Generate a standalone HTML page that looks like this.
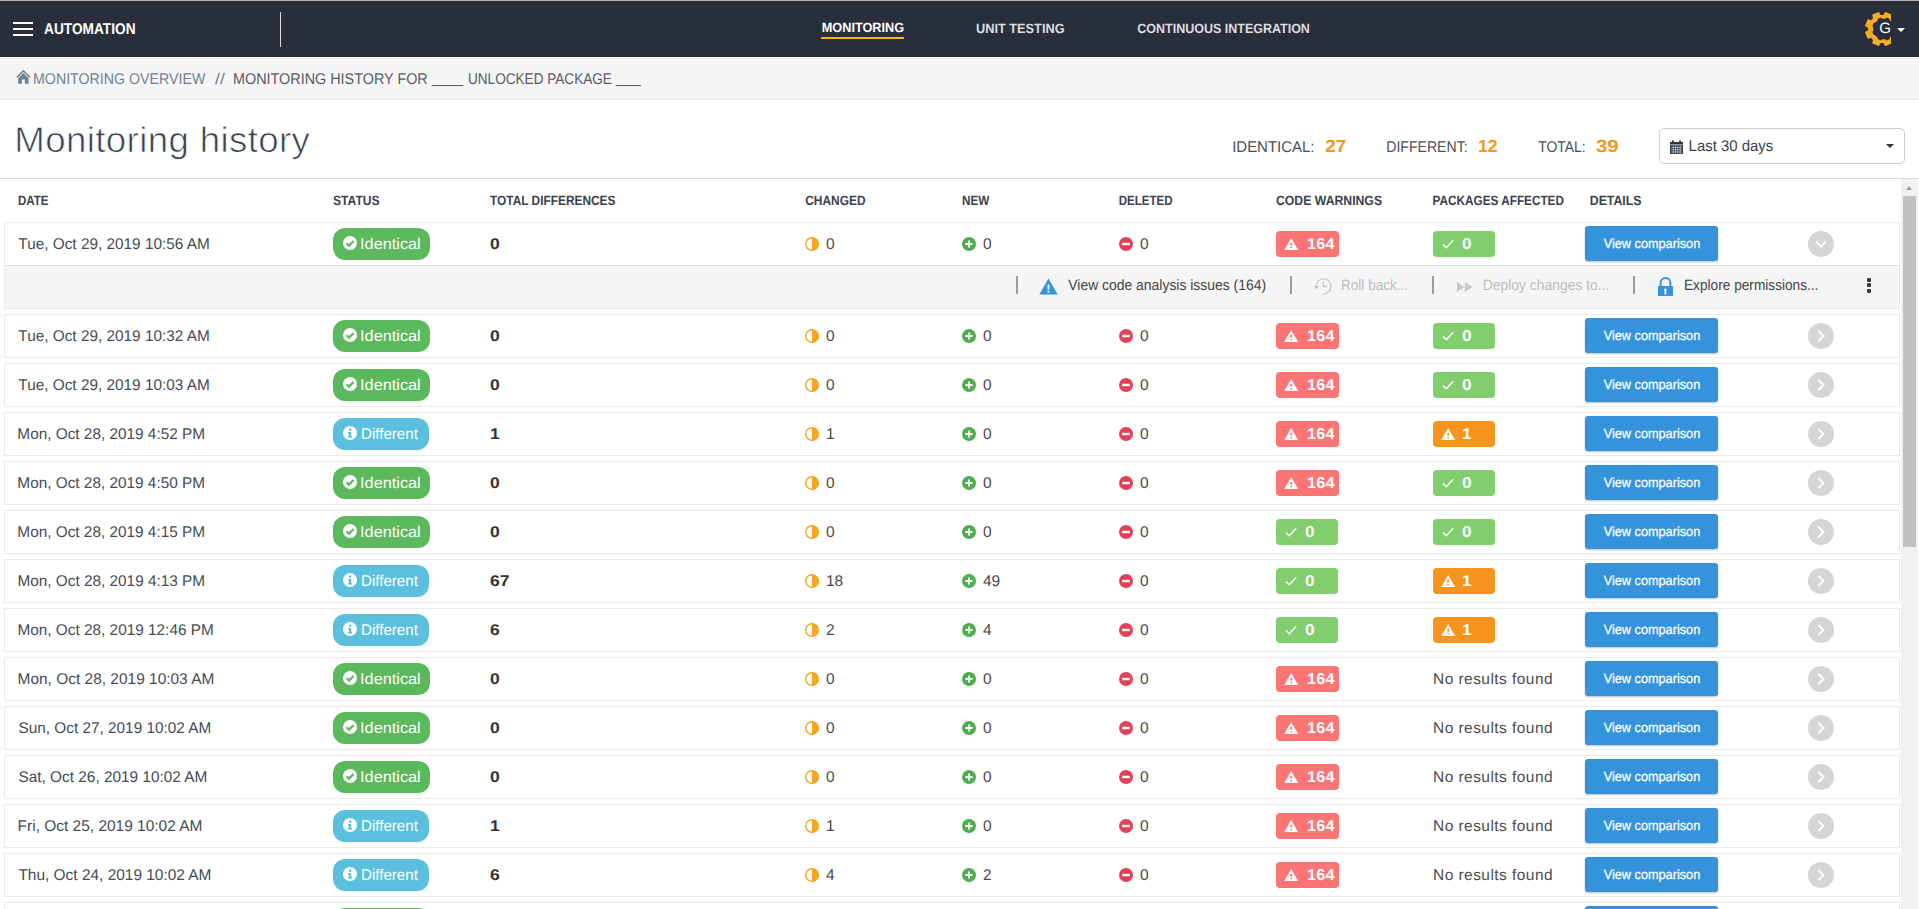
<!DOCTYPE html>
<html lang="en">
<head>
<meta charset="utf-8">
<title>Monitoring history</title>
<style>
*{box-sizing:border-box;margin:0;padding:0;transform-origin:0 0}
html,body{width:1919px;height:909px;overflow:hidden;background:#fff}
body{text-rendering:geometricPrecision;font-family:"Liberation Sans",sans-serif;font-size:15px;color:#3a3f4a;position:relative}
svg{display:block}
.abs{position:absolute}
#topline{position:absolute;left:0;top:0;width:1919px;height:1px;background:#b6b3b4}
#nav{position:absolute;left:0;top:1px;width:1919px;height:56px;background:#292e3b}
#burger{position:absolute;left:13px;top:21px;width:20px;height:14px}
#burger i{position:absolute;left:0;width:20px;height:2px;background:#fff}
#brand{position:absolute;left:44px;top:19px;font-weight:bold;font-size:15.5px;line-height:20px;color:#fff;white-space:nowrap}
#navsep{position:absolute;left:280px;top:11px;width:1px;height:35px;background:#dcdcdc}
.nv{position:absolute;top:19px;font-weight:bold;font-size:13.4px;line-height:18px;color:#dcdde0;white-space:nowrap}
.nv.act{color:#fff;top:18px}
#navul{position:absolute;left:821px;top:36px;width:83px;height:2px;background:#f9b328}
#gear{position:absolute;left:1864px;top:10px;width:27.2px;height:36px;overflow:hidden}
#gearG{transform:translateY(.4px);position:absolute;left:1879.3px;top:18px;font-size:15px;line-height:20px;color:#fff}
#navcar{position:absolute;left:1897px;top:27px;width:0;height:0;border-left:4px solid transparent;border-right:4px solid transparent;border-top:4px solid #fff}
#crumbs{position:absolute;left:0;top:57px;width:1919px;height:43px;background:#f5f5f5;border-bottom:1px solid #ececec}
#crumbs span{position:absolute;top:13px;font-size:15.5px;line-height:20px;white-space:nowrap}
#home{position:absolute;left:15.6px;top:12.3px;width:14.8px;height:15.7px}
#title{position:absolute;left:14.3px;top:117.7px;letter-spacing:.35px;font-size:35.6px;line-height:44px;color:#37424f;white-space:nowrap;-webkit-text-stroke:0.7px #fff}
.stl{position:absolute;top:138px;font-size:15.5px;line-height:20px;color:#4a4f5a;white-space:nowrap}
.stn{position:absolute;top:134px;font-size:17.6px;line-height:24px;font-weight:bold;color:#f7941d;white-space:nowrap}
#sel{position:absolute;left:1659px;top:128px;width:246px;height:36px;border:1px solid #ccc;border-radius:5px;background:#fff}
#sel span{position:absolute;left:29px;top:8px;font-size:15.5px;line-height:20px;color:#3a3f4a;white-space:nowrap}
#cal{position:absolute;left:10px;top:11px;width:13px;height:14px}
#selcar{position:absolute;left:226px;top:15px;width:0;height:0;border-left:4px solid transparent;border-right:4px solid transparent;border-top:4px solid #333}
#hline{position:absolute;left:0;top:178px;width:1919px;height:1px;background:#d9d9d9}
.th{position:absolute;top:192px;font-size:13.4px;line-height:18px;font-weight:bold;color:#3a424d;white-space:nowrap}
.row{position:absolute;left:4px;width:1896px;height:44px;border:1px solid #ebebeb;background:#fff}
.row.first{border-bottom-color:#dcdcdc}
.c{position:absolute;top:0;height:42px;line-height:44px;white-space:nowrap}
.date{left:13px;font-size:15.5px;color:#474c54}
.stc{left:328px}
.tot{left:485px;font-weight:bold;font-size:15.5px;color:#333;transform:scaleX(1.13)}
.chg{left:800px}.new{left:957px}.del{left:1114px}
.cic{position:absolute;left:0;top:14px;width:14px;height:14px}
.chg span,.new span,.del span{position:absolute;left:21px;top:0;color:#4a4a4a;font-size:15.5px}
.cw{left:1271px}.pk{left:1428px}.det{left:1580px}
.st{position:absolute;left:0;top:5px;height:32px;border-radius:12px;color:#fff;font-size:15px;line-height:34px;width:97px}
.st.ident{background:#5cb85c}
.st.diff{background:#5bc0de;width:96px}
.st span{position:absolute;left:28px;top:0;font-size:15.5px}
.sic{position:absolute;left:10px;top:8px;width:14px;height:14px}
.bdg{position:absolute;left:0;top:8px;height:26px;border-radius:4px;color:#fff;line-height:26px}
.bdg.red{background:#fc7474;width:63px;color:#fc7474}
.bdg.org{background:#f7941d;width:62px;color:#f7941d}
.bdg.grn{background:#82cd6e;width:62px;color:#82cd6e}
.bdg b{position:absolute;left:30.5px;top:1px;color:#fff;font-size:15.7px;letter-spacing:.2px;transform:scaleX(1.03);transform-origin:0 0}
.bdg.grn b,.bdg.org b{left:28.6px;transform:scaleX(1.1)}
.wic{position:absolute;left:8px;top:6.7px;width:14.4px;height:12.4px}
.kic{position:absolute;left:9px;top:8px;width:12px;height:10px}
.nores{position:absolute;left:0;top:0;color:#4c4c4c;font-size:15.5px;letter-spacing:.45px}
.btn i{position:absolute;left:17px;top:0;font-style:normal;white-space:nowrap;-webkit-text-stroke:.25px #fff}
.btn{position:absolute;left:0;top:3px;width:133px;height:35px;border-radius:3px;background:#3593dc;color:#fff;font-size:13.4px;line-height:35px;box-shadow:0 1px 2px rgba(0,0,0,.25)}
.arr{position:absolute;left:1803px;top:8px;width:26px;height:26px}
#panel{position:absolute;left:4px;top:266px;width:1896px;height:43px;background:#f5f5f5;border:1px solid #ebebeb;border-top:none}
.psep{position:absolute;top:10px;width:2px;height:18px;background:#9b9b9b}
.pt{position:absolute;top:10px;font-size:15px;line-height:20px;color:#444;white-space:nowrap}
.pt.dis{color:#bdbdbd}
.pi{position:absolute}
#dots{position:absolute;left:1862px;top:12.2px;width:4px;height:15px}
#dots i{position:absolute;left:0;width:4px;height:3.8px;background:#3a3a3a;border-radius:1px}
#sbar{position:absolute;left:1901px;top:179px;width:17px;height:730px;background:#f1f1f1}
#sthumb{position:absolute;left:2px;top:17px;width:13px;height:351px;background:#c1c1c1}
#sup{position:absolute;left:5px;top:7px;width:0;height:0;border-left:3.5px solid transparent;border-right:3.5px solid transparent;border-bottom:4px solid #a3a3a3}
</style>
</head>
<body>
<div id="topline"></div>
<div id="nav">
  <div id="burger"><i style="top:0"></i><i style="top:6px"></i><i style="top:12px"></i></div>
  <div id="brand" style="transform:translateX(0.0px) scaleX(0.8835)">AUTOMATION</div>
  <div id="navsep"></div>
  <div class="nv act" style="transform:translateX(0.75px) scaleX(0.9483);left:821px">MONITORING</div>
  <div id="navul"></div>
  <div class="nv" style="transform:translateX(0.0px) scaleX(0.9527);left:976px">UNIT TESTING</div>
  <div class="nv" style="transform:translateX(0.3px) scaleX(0.933);left:1137px">CONTINUOUS INTEGRATION</div>
  <div id="gear"><svg width="36" height="36" viewBox="-18 -18 36 36" style="margin-left:0;margin-top:0"><path d="M14.02 1.47 L16.49 2.61 L16.95 3.45 L14.43 9.55 L13.51 9.82 L10.96 8.87 L8.87 10.96 L9.82 13.51 L9.55 14.43 L3.45 16.95 L2.61 16.49 L1.47 14.02 L-1.47 14.02 L-2.61 16.49 L-3.45 16.95 L-9.55 14.43 L-9.82 13.51 L-8.87 10.96 L-10.96 8.87 L-13.51 9.82 L-14.43 9.55 L-16.95 3.45 L-16.49 2.61 L-14.02 1.47 L-14.02 -1.47 L-16.49 -2.61 L-16.95 -3.45 L-14.43 -9.55 L-13.51 -9.82 L-10.96 -8.87 L-8.87 -10.96 L-9.82 -13.51 L-9.55 -14.43 L-3.45 -16.95 L-2.61 -16.49 L-1.47 -14.02 L1.47 -14.02 L2.61 -16.49 L3.45 -16.95 L9.55 -14.43 L9.82 -13.51 L8.87 -10.96 L10.96 -8.87 L13.51 -9.82 L14.43 -9.55 L16.95 -3.45 L16.49 -2.61 L14.02 -1.47 Z M13.15 -2.85 L12.07 -1.64 L12.07 1.64 L13.15 2.85 L11.81 6.08 L10.19 6.17 L7.87 8.49 L7.78 10.11 L4.55 11.45 L3.34 10.37 L0.06 10.37 L-1.15 11.45 L-4.38 10.11 L-4.47 8.49 L-6.79 6.17 L-8.41 6.08 L-9.75 2.85 L-8.67 1.64 L-8.67 -1.64 L-9.75 -2.85 L-8.41 -6.08 L-6.79 -6.17 L-4.47 -8.49 L-4.38 -10.11 L-1.15 -11.45 L0.06 -10.37 L3.34 -10.37 L4.55 -11.45 L7.78 -10.11 L7.87 -8.49 L10.19 -6.17 L11.81 -6.08 Z" fill="#f6ab27" fill-rule="evenodd"/></svg></div>
  <div id="gearG">G</div>
  <div id="navcar"></div>
</div>
<div id="crumbs">
  <svg id="home" viewBox="0 0 16 15" preserveAspectRatio="none"><path d="M8 0.6 L15.6 7.4 L14.6 8.5 L8 2.7 L1.4 8.5 L0.4 7.4 Z" fill="#728091"/><path d="M8 3.9 L13.6 8.8 V14 H9.6 V10 H6.4 V14 H2.4 V8.8 Z" fill="#728091"/></svg>
  <span style="transform:translateX(0px) scaleX(0.9165);left:33px;color:#728091">MONITORING OVERVIEW</span>
  <span style="transform:translateX(0px) scaleX(1.15);left:215px;color:#728091">//</span>
  <span style="transform:translateX(0px) scaleX(0.9281);left:233px;color:#555b63">MONITORING HISTORY FOR</span> <span style="transform:translateX(0px) scaleX(0.72);left:432px;top:11.5px;color:#555b63">_____</span> <span style="transform:translateX(0px) scaleX(0.8763);left:467.5px;color:#555b63">UNLOCKED PACKAGE</span> <span style="transform:translateX(0px) scaleX(0.72);left:616.4px;top:11.5px;color:#555b63">____</span>
</div>
<div id="title" style="transform:translateX(0.35px) scaleX(1.0306)">Monitoring history</div>
<div class="stl" style="transform:translateX(0.2px) scaleX(0.9643);left:1232px">IDENTICAL:</div><div class="stn" style="transform:translateX(0.2px) scaleX(1.0737);left:1325px">27</div>
<div class="stl" style="transform:translateX(0.3px) scaleX(0.9076);left:1386px">DIFFERENT:</div><div class="stn" style="transform:translateX(0px) scaleX(1.0);left:1478px">12</div>
<div class="stl" style="transform:translateX(0.25px) scaleX(0.8942);left:1538px">TOTAL:</div><div class="stn" style="transform:translateX(0.0px) scaleX(1.1579);left:1596px">39</div>
<div id="sel">
  <svg id="cal" viewBox="0 0 14 14" preserveAspectRatio="none"><path d="M0 2h14v2.6H0z M2.2 0.4h2v2.4h-2z M9.8 0.4h2v2.4h-2z" fill="#2f3640"/><path d="M0 5.2h14V14H0z" fill="#2f3640"/><path d="M1 7.6h12M1 9.8h12M1 12h12" stroke="#cfd3d8" stroke-width=".7"/><path d="M3.5 5.6v8M6 5.6v8M8.5 5.6v8M11 5.6v8" stroke="#cfd3d8" stroke-width=".7"/></svg>
  <span style="transform:translateX(-0.4px) scaleX(0.9632)">Last 30 days</span>
  <div id="selcar"></div>
</div>
<div id="hline"></div>
<div class="th" style="transform:translateX(0.0px) scaleX(0.8611);left:18px">DATE</div>
<div class="th" style="transform:translateX(0.0px) scaleX(0.9038);left:333px">STATUS</div>
<div class="th" style="transform:translateX(0.0px) scaleX(0.8873);left:490px">TOTAL DIFFERENCES</div>
<div class="th" style="transform:translateX(0.25px) scaleX(0.8897);left:805px">CHANGED</div>
<div class="th" style="transform:translateX(0.0px) scaleX(0.875);left:962px">NEW</div>
<div class="th" style="transform:translateX(-0.25px) scaleX(0.8629);left:1119px">DELETED</div>
<div class="th" style="transform:translateX(0.0px) scaleX(0.9138);left:1276px">CODE WARNINGS</div>
<div class="th" style="transform:translateX(-0.5px) scaleX(0.8792);left:1433px">PACKAGES AFFECTED</div>
<div class="th" style="transform:translateX(-0.25px) scaleX(0.9196);left:1590px">DETAILS</div>
<div class="row first" style="top:222px"><div class="c date" style="transform:translateX(0.35px) scaleX(0.9902)">Tue, Oct 29, 2019 10:56 AM</div><div class="c stc"><span class="st ident"><svg class="sic" viewBox="0 0 14 14"><circle cx="7" cy="7" r="7" fill="#fff"/><path d="M3.6 7.2 L6 9.6 L10.6 4.9" fill="none" stroke="#5cb85c" stroke-width="2.2"/></svg><span style="transform:translateX(-0.9px) scaleX(1.05)">Identical</span></span></div><div class="c tot">0</div><div class="c chg"><svg class="cic" viewBox="0 0 14 14"><circle cx="7" cy="7" r="6.3" fill="#fff" stroke="#f5a623" stroke-width="1.4"/><path d="M7 0.2 A6.8 6.8 0 0 1 7 13.8 Z" fill="#f5a623"/></svg><span>0</span></div><div class="c new"><svg class="cic" viewBox="0 0 14 14"><circle cx="7" cy="7" r="7" fill="#4cae4c"/><path d="M7 3.4v7.2M3.4 7h7.2" stroke="#fff" stroke-width="2"/></svg><span>0</span></div><div class="c del"><svg class="cic" viewBox="0 0 14 14"><circle cx="7" cy="7" r="7" fill="#e4405a"/><path d="M3.2 7h7.6" stroke="#fff" stroke-width="2.4"/></svg><span>0</span></div><div class="c cw"><span class="bdg red"><svg class="wic" viewBox="0 0 14 12"><path d="M7 0 L14 12 L0 12 Z" fill="#fff"/><rect x="6.1" y="4.7" width="1.8" height="2.6" fill="currentColor"/><rect x="6.1" y="8.6" width="1.8" height="1.3" fill="currentColor"/></svg><b>164</b></span></div><div class="c pk"><span class="bdg grn"><svg class="kic" viewBox="0 0 12 10"><path d="M1 5.6 L4.3 8.8 L11.2 1.2" fill="none" stroke="#fff" stroke-width="1.4"/></svg><b>0</b></span></div><div class="c det"><span class="btn"><i style="transform:translateX(1.7px) scaleX(0.949)">View comparison</i></span></div><div class="arr"><svg viewBox="0 0 26 26"><circle cx="13" cy="13" r="13" fill="#d5d5d5"/><path d="M8.2 10.6 L13 15.4 L17.8 10.6" fill="none" stroke="#fff" stroke-width="2"/></svg></div></div>
<div class="row" style="top:314px"><div class="c date" style="transform:translateX(0.35px) scaleX(0.9902)">Tue, Oct 29, 2019 10:32 AM</div><div class="c stc"><span class="st ident"><svg class="sic" viewBox="0 0 14 14"><circle cx="7" cy="7" r="7" fill="#fff"/><path d="M3.6 7.2 L6 9.6 L10.6 4.9" fill="none" stroke="#5cb85c" stroke-width="2.2"/></svg><span style="transform:translateX(-0.9px) scaleX(1.05)">Identical</span></span></div><div class="c tot">0</div><div class="c chg"><svg class="cic" viewBox="0 0 14 14"><circle cx="7" cy="7" r="6.3" fill="#fff" stroke="#f5a623" stroke-width="1.4"/><path d="M7 0.2 A6.8 6.8 0 0 1 7 13.8 Z" fill="#f5a623"/></svg><span>0</span></div><div class="c new"><svg class="cic" viewBox="0 0 14 14"><circle cx="7" cy="7" r="7" fill="#4cae4c"/><path d="M7 3.4v7.2M3.4 7h7.2" stroke="#fff" stroke-width="2"/></svg><span>0</span></div><div class="c del"><svg class="cic" viewBox="0 0 14 14"><circle cx="7" cy="7" r="7" fill="#e4405a"/><path d="M3.2 7h7.6" stroke="#fff" stroke-width="2.4"/></svg><span>0</span></div><div class="c cw"><span class="bdg red"><svg class="wic" viewBox="0 0 14 12"><path d="M7 0 L14 12 L0 12 Z" fill="#fff"/><rect x="6.1" y="4.7" width="1.8" height="2.6" fill="currentColor"/><rect x="6.1" y="8.6" width="1.8" height="1.3" fill="currentColor"/></svg><b>164</b></span></div><div class="c pk"><span class="bdg grn"><svg class="kic" viewBox="0 0 12 10"><path d="M1 5.6 L4.3 8.8 L11.2 1.2" fill="none" stroke="#fff" stroke-width="1.4"/></svg><b>0</b></span></div><div class="c det"><span class="btn"><i style="transform:translateX(1.7px) scaleX(0.949)">View comparison</i></span></div><div class="arr"><svg viewBox="0 0 26 26"><circle cx="13" cy="13" r="13" fill="#d5d5d5"/><path d="M10.4 7.9 L15.5 13 L10.4 18.1" fill="none" stroke="#fff" stroke-width="2"/></svg></div></div>
<div class="row" style="top:363px"><div class="c date" style="transform:translateX(0.35px) scaleX(0.9902)">Tue, Oct 29, 2019 10:03 AM</div><div class="c stc"><span class="st ident"><svg class="sic" viewBox="0 0 14 14"><circle cx="7" cy="7" r="7" fill="#fff"/><path d="M3.6 7.2 L6 9.6 L10.6 4.9" fill="none" stroke="#5cb85c" stroke-width="2.2"/></svg><span style="transform:translateX(-0.9px) scaleX(1.05)">Identical</span></span></div><div class="c tot">0</div><div class="c chg"><svg class="cic" viewBox="0 0 14 14"><circle cx="7" cy="7" r="6.3" fill="#fff" stroke="#f5a623" stroke-width="1.4"/><path d="M7 0.2 A6.8 6.8 0 0 1 7 13.8 Z" fill="#f5a623"/></svg><span>0</span></div><div class="c new"><svg class="cic" viewBox="0 0 14 14"><circle cx="7" cy="7" r="7" fill="#4cae4c"/><path d="M7 3.4v7.2M3.4 7h7.2" stroke="#fff" stroke-width="2"/></svg><span>0</span></div><div class="c del"><svg class="cic" viewBox="0 0 14 14"><circle cx="7" cy="7" r="7" fill="#e4405a"/><path d="M3.2 7h7.6" stroke="#fff" stroke-width="2.4"/></svg><span>0</span></div><div class="c cw"><span class="bdg red"><svg class="wic" viewBox="0 0 14 12"><path d="M7 0 L14 12 L0 12 Z" fill="#fff"/><rect x="6.1" y="4.7" width="1.8" height="2.6" fill="currentColor"/><rect x="6.1" y="8.6" width="1.8" height="1.3" fill="currentColor"/></svg><b>164</b></span></div><div class="c pk"><span class="bdg grn"><svg class="kic" viewBox="0 0 12 10"><path d="M1 5.6 L4.3 8.8 L11.2 1.2" fill="none" stroke="#fff" stroke-width="1.4"/></svg><b>0</b></span></div><div class="c det"><span class="btn"><i style="transform:translateX(1.7px) scaleX(0.949)">View comparison</i></span></div><div class="arr"><svg viewBox="0 0 26 26"><circle cx="13" cy="13" r="13" fill="#d5d5d5"/><path d="M10.4 7.9 L15.5 13 L10.4 18.1" fill="none" stroke="#fff" stroke-width="2"/></svg></div></div>
<div class="row" style="top:412px"><div class="c date" style="transform:translateX(-0.65px) scaleX(0.9899)">Mon, Oct 28, 2019 4:52 PM</div><div class="c stc"><span class="st diff"><svg class="sic" viewBox="0 0 14 14"><circle cx="7" cy="7" r="7" fill="#fff"/><rect x="6" y="2.6" width="2.2" height="2.2" fill="#5bc0de"/><path d="M5 6h3.2v4h1v1.4H5V10h1V7.4H5z" fill="#5bc0de"/></svg><span style="transform:translateX(0.0px) scaleX(0.9759)">Different</span></span></div><div class="c tot">1</div><div class="c chg"><svg class="cic" viewBox="0 0 14 14"><circle cx="7" cy="7" r="6.3" fill="#fff" stroke="#f5a623" stroke-width="1.4"/><path d="M7 0.2 A6.8 6.8 0 0 1 7 13.8 Z" fill="#f5a623"/></svg><span>1</span></div><div class="c new"><svg class="cic" viewBox="0 0 14 14"><circle cx="7" cy="7" r="7" fill="#4cae4c"/><path d="M7 3.4v7.2M3.4 7h7.2" stroke="#fff" stroke-width="2"/></svg><span>0</span></div><div class="c del"><svg class="cic" viewBox="0 0 14 14"><circle cx="7" cy="7" r="7" fill="#e4405a"/><path d="M3.2 7h7.6" stroke="#fff" stroke-width="2.4"/></svg><span>0</span></div><div class="c cw"><span class="bdg red"><svg class="wic" viewBox="0 0 14 12"><path d="M7 0 L14 12 L0 12 Z" fill="#fff"/><rect x="6.1" y="4.7" width="1.8" height="2.6" fill="currentColor"/><rect x="6.1" y="8.6" width="1.8" height="1.3" fill="currentColor"/></svg><b>164</b></span></div><div class="c pk"><span class="bdg org"><svg class="wic" viewBox="0 0 14 12"><path d="M7 0 L14 12 L0 12 Z" fill="#fff"/><rect x="6.1" y="4.7" width="1.8" height="2.6" fill="currentColor"/><rect x="6.1" y="8.6" width="1.8" height="1.3" fill="currentColor"/></svg><b>1</b></span></div><div class="c det"><span class="btn"><i style="transform:translateX(1.7px) scaleX(0.949)">View comparison</i></span></div><div class="arr"><svg viewBox="0 0 26 26"><circle cx="13" cy="13" r="13" fill="#d5d5d5"/><path d="M10.4 7.9 L15.5 13 L10.4 18.1" fill="none" stroke="#fff" stroke-width="2"/></svg></div></div>
<div class="row" style="top:461px"><div class="c date" style="transform:translateX(-0.65px) scaleX(0.9899)">Mon, Oct 28, 2019 4:50 PM</div><div class="c stc"><span class="st ident"><svg class="sic" viewBox="0 0 14 14"><circle cx="7" cy="7" r="7" fill="#fff"/><path d="M3.6 7.2 L6 9.6 L10.6 4.9" fill="none" stroke="#5cb85c" stroke-width="2.2"/></svg><span style="transform:translateX(-0.9px) scaleX(1.05)">Identical</span></span></div><div class="c tot">0</div><div class="c chg"><svg class="cic" viewBox="0 0 14 14"><circle cx="7" cy="7" r="6.3" fill="#fff" stroke="#f5a623" stroke-width="1.4"/><path d="M7 0.2 A6.8 6.8 0 0 1 7 13.8 Z" fill="#f5a623"/></svg><span>0</span></div><div class="c new"><svg class="cic" viewBox="0 0 14 14"><circle cx="7" cy="7" r="7" fill="#4cae4c"/><path d="M7 3.4v7.2M3.4 7h7.2" stroke="#fff" stroke-width="2"/></svg><span>0</span></div><div class="c del"><svg class="cic" viewBox="0 0 14 14"><circle cx="7" cy="7" r="7" fill="#e4405a"/><path d="M3.2 7h7.6" stroke="#fff" stroke-width="2.4"/></svg><span>0</span></div><div class="c cw"><span class="bdg red"><svg class="wic" viewBox="0 0 14 12"><path d="M7 0 L14 12 L0 12 Z" fill="#fff"/><rect x="6.1" y="4.7" width="1.8" height="2.6" fill="currentColor"/><rect x="6.1" y="8.6" width="1.8" height="1.3" fill="currentColor"/></svg><b>164</b></span></div><div class="c pk"><span class="bdg grn"><svg class="kic" viewBox="0 0 12 10"><path d="M1 5.6 L4.3 8.8 L11.2 1.2" fill="none" stroke="#fff" stroke-width="1.4"/></svg><b>0</b></span></div><div class="c det"><span class="btn"><i style="transform:translateX(1.7px) scaleX(0.949)">View comparison</i></span></div><div class="arr"><svg viewBox="0 0 26 26"><circle cx="13" cy="13" r="13" fill="#d5d5d5"/><path d="M10.4 7.9 L15.5 13 L10.4 18.1" fill="none" stroke="#fff" stroke-width="2"/></svg></div></div>
<div class="row" style="top:510px"><div class="c date" style="transform:translateX(-0.65px) scaleX(0.9899)">Mon, Oct 28, 2019 4:15 PM</div><div class="c stc"><span class="st ident"><svg class="sic" viewBox="0 0 14 14"><circle cx="7" cy="7" r="7" fill="#fff"/><path d="M3.6 7.2 L6 9.6 L10.6 4.9" fill="none" stroke="#5cb85c" stroke-width="2.2"/></svg><span style="transform:translateX(-0.9px) scaleX(1.05)">Identical</span></span></div><div class="c tot">0</div><div class="c chg"><svg class="cic" viewBox="0 0 14 14"><circle cx="7" cy="7" r="6.3" fill="#fff" stroke="#f5a623" stroke-width="1.4"/><path d="M7 0.2 A6.8 6.8 0 0 1 7 13.8 Z" fill="#f5a623"/></svg><span>0</span></div><div class="c new"><svg class="cic" viewBox="0 0 14 14"><circle cx="7" cy="7" r="7" fill="#4cae4c"/><path d="M7 3.4v7.2M3.4 7h7.2" stroke="#fff" stroke-width="2"/></svg><span>0</span></div><div class="c del"><svg class="cic" viewBox="0 0 14 14"><circle cx="7" cy="7" r="7" fill="#e4405a"/><path d="M3.2 7h7.6" stroke="#fff" stroke-width="2.4"/></svg><span>0</span></div><div class="c cw"><span class="bdg grn"><svg class="kic" viewBox="0 0 12 10"><path d="M1 5.6 L4.3 8.8 L11.2 1.2" fill="none" stroke="#fff" stroke-width="1.4"/></svg><b>0</b></span></div><div class="c pk"><span class="bdg grn"><svg class="kic" viewBox="0 0 12 10"><path d="M1 5.6 L4.3 8.8 L11.2 1.2" fill="none" stroke="#fff" stroke-width="1.4"/></svg><b>0</b></span></div><div class="c det"><span class="btn"><i style="transform:translateX(1.7px) scaleX(0.949)">View comparison</i></span></div><div class="arr"><svg viewBox="0 0 26 26"><circle cx="13" cy="13" r="13" fill="#d5d5d5"/><path d="M10.4 7.9 L15.5 13 L10.4 18.1" fill="none" stroke="#fff" stroke-width="2"/></svg></div></div>
<div class="row" style="top:559px"><div class="c date" style="transform:translateX(-0.6px) scaleX(0.9904)">Mon, Oct 28, 2019 4:13 PM</div><div class="c stc"><span class="st diff"><svg class="sic" viewBox="0 0 14 14"><circle cx="7" cy="7" r="7" fill="#fff"/><rect x="6" y="2.6" width="2.2" height="2.2" fill="#5bc0de"/><path d="M5 6h3.2v4h1v1.4H5V10h1V7.4H5z" fill="#5bc0de"/></svg><span style="transform:translateX(0.0px) scaleX(0.9759)">Different</span></span></div><div class="c tot">67</div><div class="c chg"><svg class="cic" viewBox="0 0 14 14"><circle cx="7" cy="7" r="6.3" fill="#fff" stroke="#f5a623" stroke-width="1.4"/><path d="M7 0.2 A6.8 6.8 0 0 1 7 13.8 Z" fill="#f5a623"/></svg><span>18</span></div><div class="c new"><svg class="cic" viewBox="0 0 14 14"><circle cx="7" cy="7" r="7" fill="#4cae4c"/><path d="M7 3.4v7.2M3.4 7h7.2" stroke="#fff" stroke-width="2"/></svg><span>49</span></div><div class="c del"><svg class="cic" viewBox="0 0 14 14"><circle cx="7" cy="7" r="7" fill="#e4405a"/><path d="M3.2 7h7.6" stroke="#fff" stroke-width="2.4"/></svg><span>0</span></div><div class="c cw"><span class="bdg grn"><svg class="kic" viewBox="0 0 12 10"><path d="M1 5.6 L4.3 8.8 L11.2 1.2" fill="none" stroke="#fff" stroke-width="1.4"/></svg><b>0</b></span></div><div class="c pk"><span class="bdg org"><svg class="wic" viewBox="0 0 14 12"><path d="M7 0 L14 12 L0 12 Z" fill="#fff"/><rect x="6.1" y="4.7" width="1.8" height="2.6" fill="currentColor"/><rect x="6.1" y="8.6" width="1.8" height="1.3" fill="currentColor"/></svg><b>1</b></span></div><div class="c det"><span class="btn"><i style="transform:translateX(1.7px) scaleX(0.949)">View comparison</i></span></div><div class="arr"><svg viewBox="0 0 26 26"><circle cx="13" cy="13" r="13" fill="#d5d5d5"/><path d="M10.4 7.9 L15.5 13 L10.4 18.1" fill="none" stroke="#fff" stroke-width="2"/></svg></div></div>
<div class="row" style="top:608px"><div class="c date" style="transform:translateX(-0.6px) scaleX(0.9909)">Mon, Oct 28, 2019 12:46 PM</div><div class="c stc"><span class="st diff"><svg class="sic" viewBox="0 0 14 14"><circle cx="7" cy="7" r="7" fill="#fff"/><rect x="6" y="2.6" width="2.2" height="2.2" fill="#5bc0de"/><path d="M5 6h3.2v4h1v1.4H5V10h1V7.4H5z" fill="#5bc0de"/></svg><span style="transform:translateX(0.0px) scaleX(0.9759)">Different</span></span></div><div class="c tot">6</div><div class="c chg"><svg class="cic" viewBox="0 0 14 14"><circle cx="7" cy="7" r="6.3" fill="#fff" stroke="#f5a623" stroke-width="1.4"/><path d="M7 0.2 A6.8 6.8 0 0 1 7 13.8 Z" fill="#f5a623"/></svg><span>2</span></div><div class="c new"><svg class="cic" viewBox="0 0 14 14"><circle cx="7" cy="7" r="7" fill="#4cae4c"/><path d="M7 3.4v7.2M3.4 7h7.2" stroke="#fff" stroke-width="2"/></svg><span>4</span></div><div class="c del"><svg class="cic" viewBox="0 0 14 14"><circle cx="7" cy="7" r="7" fill="#e4405a"/><path d="M3.2 7h7.6" stroke="#fff" stroke-width="2.4"/></svg><span>0</span></div><div class="c cw"><span class="bdg grn"><svg class="kic" viewBox="0 0 12 10"><path d="M1 5.6 L4.3 8.8 L11.2 1.2" fill="none" stroke="#fff" stroke-width="1.4"/></svg><b>0</b></span></div><div class="c pk"><span class="bdg org"><svg class="wic" viewBox="0 0 14 12"><path d="M7 0 L14 12 L0 12 Z" fill="#fff"/><rect x="6.1" y="4.7" width="1.8" height="2.6" fill="currentColor"/><rect x="6.1" y="8.6" width="1.8" height="1.3" fill="currentColor"/></svg><b>1</b></span></div><div class="c det"><span class="btn"><i style="transform:translateX(1.7px) scaleX(0.949)">View comparison</i></span></div><div class="arr"><svg viewBox="0 0 26 26"><circle cx="13" cy="13" r="13" fill="#d5d5d5"/><path d="M10.4 7.9 L15.5 13 L10.4 18.1" fill="none" stroke="#fff" stroke-width="2"/></svg></div></div>
<div class="row" style="top:657px"><div class="c date" style="transform:translateX(-0.45px) scaleX(0.9974)">Mon, Oct 28, 2019 10:03 AM</div><div class="c stc"><span class="st ident"><svg class="sic" viewBox="0 0 14 14"><circle cx="7" cy="7" r="7" fill="#fff"/><path d="M3.6 7.2 L6 9.6 L10.6 4.9" fill="none" stroke="#5cb85c" stroke-width="2.2"/></svg><span style="transform:translateX(-0.9px) scaleX(1.05)">Identical</span></span></div><div class="c tot">0</div><div class="c chg"><svg class="cic" viewBox="0 0 14 14"><circle cx="7" cy="7" r="6.3" fill="#fff" stroke="#f5a623" stroke-width="1.4"/><path d="M7 0.2 A6.8 6.8 0 0 1 7 13.8 Z" fill="#f5a623"/></svg><span>0</span></div><div class="c new"><svg class="cic" viewBox="0 0 14 14"><circle cx="7" cy="7" r="7" fill="#4cae4c"/><path d="M7 3.4v7.2M3.4 7h7.2" stroke="#fff" stroke-width="2"/></svg><span>0</span></div><div class="c del"><svg class="cic" viewBox="0 0 14 14"><circle cx="7" cy="7" r="7" fill="#e4405a"/><path d="M3.2 7h7.6" stroke="#fff" stroke-width="2.4"/></svg><span>0</span></div><div class="c cw"><span class="bdg red"><svg class="wic" viewBox="0 0 14 12"><path d="M7 0 L14 12 L0 12 Z" fill="#fff"/><rect x="6.1" y="4.7" width="1.8" height="2.6" fill="currentColor"/><rect x="6.1" y="8.6" width="1.8" height="1.3" fill="currentColor"/></svg><b>164</b></span></div><div class="c pk"><span class="nores" style="transform:translateX(0px) scaleX(1.0)">No results found</span></div><div class="c det"><span class="btn"><i style="transform:translateX(1.7px) scaleX(0.949)">View comparison</i></span></div><div class="arr"><svg viewBox="0 0 26 26"><circle cx="13" cy="13" r="13" fill="#d5d5d5"/><path d="M10.4 7.9 L15.5 13 L10.4 18.1" fill="none" stroke="#fff" stroke-width="2"/></svg></div></div>
<div class="row" style="top:706px"><div class="c date" style="transform:translateX(0.4px) scaleX(0.9907)">Sun, Oct 27, 2019 10:02 AM</div><div class="c stc"><span class="st ident"><svg class="sic" viewBox="0 0 14 14"><circle cx="7" cy="7" r="7" fill="#fff"/><path d="M3.6 7.2 L6 9.6 L10.6 4.9" fill="none" stroke="#5cb85c" stroke-width="2.2"/></svg><span style="transform:translateX(-0.9px) scaleX(1.05)">Identical</span></span></div><div class="c tot">0</div><div class="c chg"><svg class="cic" viewBox="0 0 14 14"><circle cx="7" cy="7" r="6.3" fill="#fff" stroke="#f5a623" stroke-width="1.4"/><path d="M7 0.2 A6.8 6.8 0 0 1 7 13.8 Z" fill="#f5a623"/></svg><span>0</span></div><div class="c new"><svg class="cic" viewBox="0 0 14 14"><circle cx="7" cy="7" r="7" fill="#4cae4c"/><path d="M7 3.4v7.2M3.4 7h7.2" stroke="#fff" stroke-width="2"/></svg><span>0</span></div><div class="c del"><svg class="cic" viewBox="0 0 14 14"><circle cx="7" cy="7" r="7" fill="#e4405a"/><path d="M3.2 7h7.6" stroke="#fff" stroke-width="2.4"/></svg><span>0</span></div><div class="c cw"><span class="bdg red"><svg class="wic" viewBox="0 0 14 12"><path d="M7 0 L14 12 L0 12 Z" fill="#fff"/><rect x="6.1" y="4.7" width="1.8" height="2.6" fill="currentColor"/><rect x="6.1" y="8.6" width="1.8" height="1.3" fill="currentColor"/></svg><b>164</b></span></div><div class="c pk"><span class="nores" style="transform:translateX(0px) scaleX(1.0)">No results found</span></div><div class="c det"><span class="btn"><i style="transform:translateX(1.7px) scaleX(0.949)">View comparison</i></span></div><div class="arr"><svg viewBox="0 0 26 26"><circle cx="13" cy="13" r="13" fill="#d5d5d5"/><path d="M10.4 7.9 L15.5 13 L10.4 18.1" fill="none" stroke="#fff" stroke-width="2"/></svg></div></div>
<div class="row" style="top:755px"><div class="c date" style="transform:translateX(0.5px) scaleX(0.9916)">Sat, Oct 26, 2019 10:02 AM</div><div class="c stc"><span class="st ident"><svg class="sic" viewBox="0 0 14 14"><circle cx="7" cy="7" r="7" fill="#fff"/><path d="M3.6 7.2 L6 9.6 L10.6 4.9" fill="none" stroke="#5cb85c" stroke-width="2.2"/></svg><span style="transform:translateX(-0.9px) scaleX(1.05)">Identical</span></span></div><div class="c tot">0</div><div class="c chg"><svg class="cic" viewBox="0 0 14 14"><circle cx="7" cy="7" r="6.3" fill="#fff" stroke="#f5a623" stroke-width="1.4"/><path d="M7 0.2 A6.8 6.8 0 0 1 7 13.8 Z" fill="#f5a623"/></svg><span>0</span></div><div class="c new"><svg class="cic" viewBox="0 0 14 14"><circle cx="7" cy="7" r="7" fill="#4cae4c"/><path d="M7 3.4v7.2M3.4 7h7.2" stroke="#fff" stroke-width="2"/></svg><span>0</span></div><div class="c del"><svg class="cic" viewBox="0 0 14 14"><circle cx="7" cy="7" r="7" fill="#e4405a"/><path d="M3.2 7h7.6" stroke="#fff" stroke-width="2.4"/></svg><span>0</span></div><div class="c cw"><span class="bdg red"><svg class="wic" viewBox="0 0 14 12"><path d="M7 0 L14 12 L0 12 Z" fill="#fff"/><rect x="6.1" y="4.7" width="1.8" height="2.6" fill="currentColor"/><rect x="6.1" y="8.6" width="1.8" height="1.3" fill="currentColor"/></svg><b>164</b></span></div><div class="c pk"><span class="nores" style="transform:translateX(0px) scaleX(1.0)">No results found</span></div><div class="c det"><span class="btn"><i style="transform:translateX(1.7px) scaleX(0.949)">View comparison</i></span></div><div class="arr"><svg viewBox="0 0 26 26"><circle cx="13" cy="13" r="13" fill="#d5d5d5"/><path d="M10.4 7.9 L15.5 13 L10.4 18.1" fill="none" stroke="#fff" stroke-width="2"/></svg></div></div>
<div class="row" style="top:804px"><div class="c date" style="transform:translateX(-0.4px) scaleX(0.9978)">Fri, Oct 25, 2019 10:02 AM</div><div class="c stc"><span class="st diff"><svg class="sic" viewBox="0 0 14 14"><circle cx="7" cy="7" r="7" fill="#fff"/><rect x="6" y="2.6" width="2.2" height="2.2" fill="#5bc0de"/><path d="M5 6h3.2v4h1v1.4H5V10h1V7.4H5z" fill="#5bc0de"/></svg><span style="transform:translateX(0.0px) scaleX(0.9759)">Different</span></span></div><div class="c tot">1</div><div class="c chg"><svg class="cic" viewBox="0 0 14 14"><circle cx="7" cy="7" r="6.3" fill="#fff" stroke="#f5a623" stroke-width="1.4"/><path d="M7 0.2 A6.8 6.8 0 0 1 7 13.8 Z" fill="#f5a623"/></svg><span>1</span></div><div class="c new"><svg class="cic" viewBox="0 0 14 14"><circle cx="7" cy="7" r="7" fill="#4cae4c"/><path d="M7 3.4v7.2M3.4 7h7.2" stroke="#fff" stroke-width="2"/></svg><span>0</span></div><div class="c del"><svg class="cic" viewBox="0 0 14 14"><circle cx="7" cy="7" r="7" fill="#e4405a"/><path d="M3.2 7h7.6" stroke="#fff" stroke-width="2.4"/></svg><span>0</span></div><div class="c cw"><span class="bdg red"><svg class="wic" viewBox="0 0 14 12"><path d="M7 0 L14 12 L0 12 Z" fill="#fff"/><rect x="6.1" y="4.7" width="1.8" height="2.6" fill="currentColor"/><rect x="6.1" y="8.6" width="1.8" height="1.3" fill="currentColor"/></svg><b>164</b></span></div><div class="c pk"><span class="nores" style="transform:translateX(0px) scaleX(1.0)">No results found</span></div><div class="c det"><span class="btn"><i style="transform:translateX(1.7px) scaleX(0.949)">View comparison</i></span></div><div class="arr"><svg viewBox="0 0 26 26"><circle cx="13" cy="13" r="13" fill="#d5d5d5"/><path d="M10.4 7.9 L15.5 13 L10.4 18.1" fill="none" stroke="#fff" stroke-width="2"/></svg></div></div>
<div class="row" style="top:853px"><div class="c date" style="transform:translateX(0.4px) scaleX(0.9959)">Thu, Oct 24, 2019 10:02 AM</div><div class="c stc"><span class="st diff"><svg class="sic" viewBox="0 0 14 14"><circle cx="7" cy="7" r="7" fill="#fff"/><rect x="6" y="2.6" width="2.2" height="2.2" fill="#5bc0de"/><path d="M5 6h3.2v4h1v1.4H5V10h1V7.4H5z" fill="#5bc0de"/></svg><span style="transform:translateX(0.0px) scaleX(0.9759)">Different</span></span></div><div class="c tot">6</div><div class="c chg"><svg class="cic" viewBox="0 0 14 14"><circle cx="7" cy="7" r="6.3" fill="#fff" stroke="#f5a623" stroke-width="1.4"/><path d="M7 0.2 A6.8 6.8 0 0 1 7 13.8 Z" fill="#f5a623"/></svg><span>4</span></div><div class="c new"><svg class="cic" viewBox="0 0 14 14"><circle cx="7" cy="7" r="7" fill="#4cae4c"/><path d="M7 3.4v7.2M3.4 7h7.2" stroke="#fff" stroke-width="2"/></svg><span>2</span></div><div class="c del"><svg class="cic" viewBox="0 0 14 14"><circle cx="7" cy="7" r="7" fill="#e4405a"/><path d="M3.2 7h7.6" stroke="#fff" stroke-width="2.4"/></svg><span>0</span></div><div class="c cw"><span class="bdg red"><svg class="wic" viewBox="0 0 14 12"><path d="M7 0 L14 12 L0 12 Z" fill="#fff"/><rect x="6.1" y="4.7" width="1.8" height="2.6" fill="currentColor"/><rect x="6.1" y="8.6" width="1.8" height="1.3" fill="currentColor"/></svg><b>164</b></span></div><div class="c pk"><span class="nores" style="transform:translateX(0px) scaleX(1.0)">No results found</span></div><div class="c det"><span class="btn"><i style="transform:translateX(1.7px) scaleX(0.949)">View comparison</i></span></div><div class="arr"><svg viewBox="0 0 26 26"><circle cx="13" cy="13" r="13" fill="#d5d5d5"/><path d="M10.4 7.9 L15.5 13 L10.4 18.1" fill="none" stroke="#fff" stroke-width="2"/></svg></div></div>
<div class="row" style="top:902px"><div class="c date">Wed, Oct 23, 2019 10:02 AM</div><div class="c stc"><span class="st ident"><svg class="sic" viewBox="0 0 14 14"><circle cx="7" cy="7" r="7" fill="#fff"/><path d="M3.6 7.2 L6 9.6 L10.6 4.9" fill="none" stroke="#5cb85c" stroke-width="2.2"/></svg><span style="transform:translateX(-0.9px) scaleX(1.05)">Identical</span></span></div><div class="c tot">0</div><div class="c chg"><svg class="cic" viewBox="0 0 14 14"><circle cx="7" cy="7" r="6.3" fill="#fff" stroke="#f5a623" stroke-width="1.4"/><path d="M7 0.2 A6.8 6.8 0 0 1 7 13.8 Z" fill="#f5a623"/></svg><span>0</span></div><div class="c new"><svg class="cic" viewBox="0 0 14 14"><circle cx="7" cy="7" r="7" fill="#4cae4c"/><path d="M7 3.4v7.2M3.4 7h7.2" stroke="#fff" stroke-width="2"/></svg><span>0</span></div><div class="c del"><svg class="cic" viewBox="0 0 14 14"><circle cx="7" cy="7" r="7" fill="#e4405a"/><path d="M3.2 7h7.6" stroke="#fff" stroke-width="2.4"/></svg><span>0</span></div><div class="c cw"><span class="bdg red"><svg class="wic" viewBox="0 0 14 12"><path d="M7 0 L14 12 L0 12 Z" fill="#fff"/><rect x="6.1" y="4.7" width="1.8" height="2.6" fill="currentColor"/><rect x="6.1" y="8.6" width="1.8" height="1.3" fill="currentColor"/></svg><b>164</b></span></div><div class="c pk"><span class="nores" style="transform:translateX(0px) scaleX(1.0)">No results found</span></div><div class="c det"><span class="btn"><i style="transform:translateX(1.7px) scaleX(0.949)">View comparison</i></span></div><div class="arr"><svg viewBox="0 0 26 26"><circle cx="13" cy="13" r="13" fill="#d5d5d5"/><path d="M10.4 7.9 L15.5 13 L10.4 18.1" fill="none" stroke="#fff" stroke-width="2"/></svg></div></div>

<div id="panel">
  <div class="psep" style="left:1011px"></div>
  <svg class="pi" style="left:1034px;top:12px" width="19" height="17" viewBox="0 0 19 17"><path d="M9.5 0.5 L18.7 16.6 H0.3 Z" fill="#3593dc"/><rect x="8.6" y="6.6" width="1.8" height="5" fill="#fff"/><rect x="8.6" y="12.8" width="1.8" height="1.8" fill="#fff"/></svg>
  <div class="pt" style="transform:translateX(0.3px) scaleX(0.9277);left:1063px">View code analysis issues (164)</div>
  <div class="psep" style="left:1285px"></div>
  <svg class="pi" style="left:1308px;top:10px" width="20" height="20" viewBox="0 0 20 20"><path d="M3 10.4 A7.5 7.5 0 1 1 10.5 17.9" fill="none" stroke="#c8c8c8" stroke-width="1.3"/><path d="M0.6 10 H6.2 L3.4 13.5 Z" fill="#c8c8c8"/><path d="M10.4 5.3 V10.5 H14" fill="none" stroke="#c8c8c8" stroke-width="1.3"/></svg>
  <div class="pt dis" style="transform:translateX(0.0px) scaleX(0.9041);left:1335.5px">Roll back...</div>
  <div class="psep" style="left:1427px"></div>
  <svg class="pi" style="left:1452.3px;top:15.5px" width="16" height="10" viewBox="0 0 16 10"><path d="M0 0 L7.5 5 L0 10 Z M7.9 0 L15.6 5 L7.9 10 Z" fill="#c8c8c8"/></svg>
  <div class="pt dis" style="transform:translateX(-0.25px) scaleX(0.9259);left:1477.8px">Deploy changes to...</div>
  <div class="psep" style="left:1628px"></div>
  <svg class="pi" style="left:1653px;top:11px" width="15" height="19" viewBox="0 0 15 19"><path d="M2.6 9.4 V6 A4.9 4.9 0 0 1 12.4 6 V9.4" fill="none" stroke="#3593dc" stroke-width="2"/><rect x="0" y="9" width="15" height="10" rx=".6" fill="#3593dc"/><circle cx="7.4" cy="12.9" r="1.3" fill="#fff"/><path d="M6.8 13 h1.2 l.4 4.4 h-2 z" fill="#fff"/></svg>
  <div class="pt" style="transform:translateX(0.0px) scaleX(0.911);left:1679px">Explore permissions...</div>
  <div id="dots"><i style="top:0"></i><i style="top:5.3px"></i><i style="top:10.6px"></i></div>
</div>
<div id="sbar"><div id="sup"></div><div id="sthumb"></div></div>
</body>
</html>
